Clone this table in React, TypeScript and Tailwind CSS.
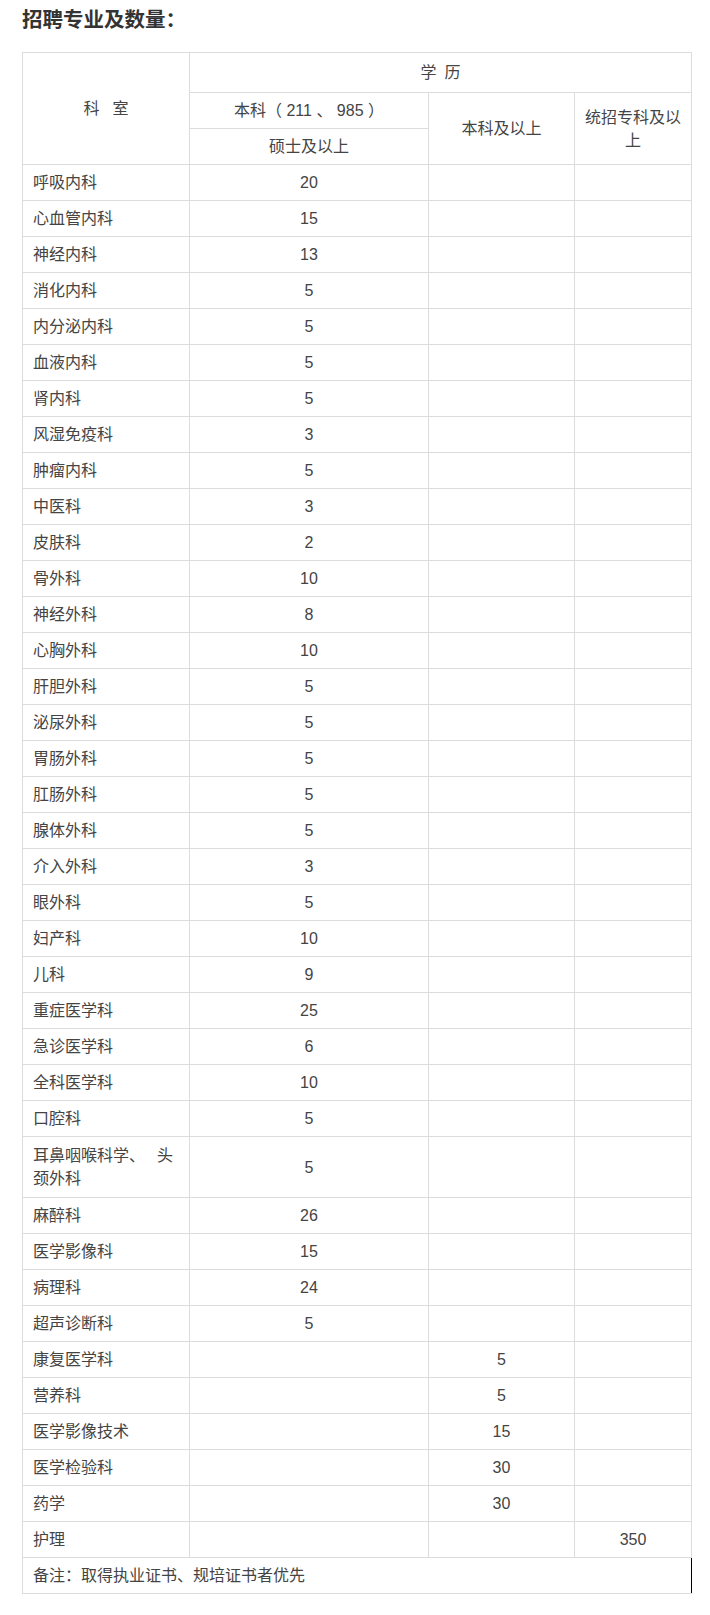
import type { ReactNode } from 'react';

// --- Data ---

type Row = { name: ReactNode; a?: string; b?: string; c?: string; tall?: boolean };

const rows: Row[] = [
  { name: '呼吸内科', a: '20' },
  { name: '心血管内科', a: '15' },
  { name: '神经内科', a: '13' },
  { name: '消化内科', a: '5' },
  { name: '内分泌内科', a: '5' },
  { name: '血液内科', a: '5' },
  { name: '肾内科', a: '5' },
  { name: '风湿免疫科', a: '3' },
  { name: '肿瘤内科', a: '5' },
  { name: '中医科', a: '3' },
  { name: '皮肤科', a: '2' },
  { name: '骨外科', a: '10' },
  { name: '神经外科', a: '8' },
  { name: '心胸外科', a: '10' },
  { name: '肝胆外科', a: '5' },
  { name: '泌尿外科', a: '5' },
  { name: '胃肠外科', a: '5' },
  { name: '肛肠外科', a: '5' },
  { name: '腺体外科', a: '5' },
  { name: '介入外科', a: '3' },
  { name: '眼外科', a: '5' },
  { name: '妇产科', a: '10' },
  { name: '儿科', a: '9' },
  { name: '重症医学科', a: '25' },
  { name: '急诊医学科', a: '6' },
  { name: '全科医学科', a: '10' },
  { name: '口腔科', a: '5' },
  {
    name: (
      <>
        耳鼻咽喉科学、<span className="ml-[12px]">头</span>
        <br />
        颈外科
      </>
    ),
    a: '5',
    tall: true,
  },
  { name: '麻醉科', a: '26' },
  { name: '医学影像科', a: '15' },
  { name: '病理科', a: '24' },
  { name: '超声诊断科', a: '5' },
  { name: '康复医学科', b: '5' },
  { name: '营养科', b: '5' },
  { name: '医学影像技术', b: '15' },
  { name: '医学检验科', b: '30' },
  { name: '药学', b: '30' },
  { name: '护理', c: '350' },
];

const cell = 'border border-[#dcdcdc] px-[10px] py-0 align-middle';

// --- Component ---

export default function App(): ReactNode {
  return (
    <div
      className="min-h-[1615px] bg-white pl-[22px] pt-[6px] text-[#444]"
      style={{ fontFamily: '"Liberation Sans", "Noto Sans CJK SC", sans-serif' }}
    >
      <h2 className="text-[20.5px] font-bold leading-[28px] text-[#333]">招聘专业及数量：</h2>

      <table className="mt-[18px] w-[669px] table-fixed border-collapse text-[16px] leading-[23px]">
        <colgroup>
          <col className="w-[167px]" />
          <col className="w-[239px]" />
          <col className="w-[146px]" />
          <col className="w-[117px]" />
        </colgroup>
        <tbody>
          <tr className="h-[40px]">
            <td rowSpan={3} className={`${cell} text-center`}>
              科<span className="ml-[13px]">室</span>
            </td>
            <td colSpan={3} className={`${cell} text-center`}>
              学<span className="ml-[8px]">历</span>
            </td>
          </tr>
          <tr className="h-[36px]">
            <td className={`${cell} text-center`}>本科（ 211 、 985 ）</td>
            <td rowSpan={2} className={`${cell} text-center`}>
              本科及以上
            </td>
            <td rowSpan={2} className={`${cell} text-center`}>
              统招专科及以上
            </td>
          </tr>
          <tr className="h-[36px]">
            <td className={`${cell} text-center`}>硕士及以上</td>
          </tr>

          {rows.map((r, i) => (
            <tr key={i} className={r.tall ? 'h-[61px]' : 'h-[36px]'}>
              <td className={cell}>{r.name}</td>
              <td className={`${cell} text-center`}>{r.a}</td>
              <td className={`${cell} text-center`}>{r.b}</td>
              <td className={`${cell} text-center`}>{r.c}</td>
            </tr>
          ))}

          <tr className="h-[36px]">
            <td colSpan={4} className={`${cell} border-r-black`}>
              备注：取得执业证书、规培证书者优先
            </td>
          </tr>
        </tbody>
      </table>
    </div>
  );
}
